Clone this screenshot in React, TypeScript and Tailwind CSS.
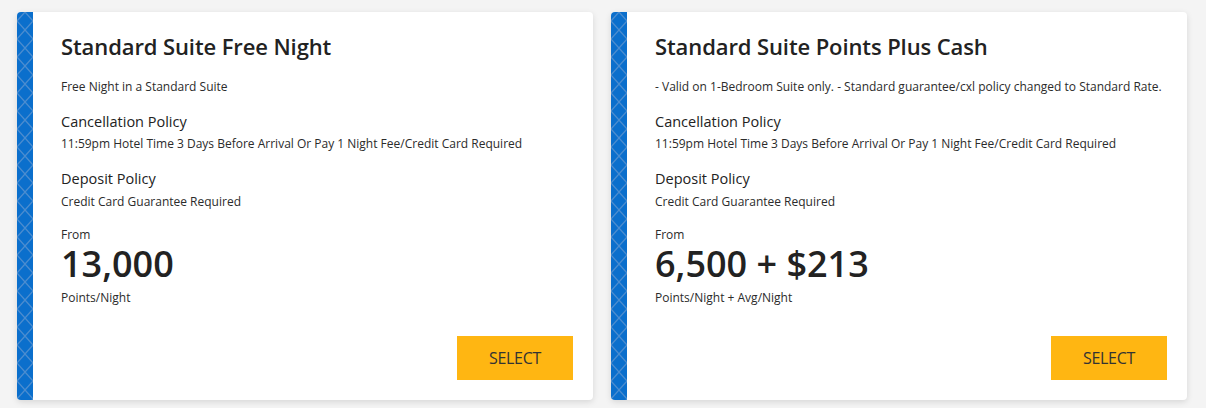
import React from "react";

const Stripe = ({ id }: { id: string }) => (
  <div className="w-4 shrink-0 bg-[#0b6fcc] overflow-hidden rounded-l-[4px]">
    <svg width="16" height="388" className="block">
      <defs>
        <pattern id={id} width="16" height="36" patternUnits="userSpaceOnUse" y="-9">
          <path d="M-2 -2.25 L18 20.25 M-2 33.75 L18 56.25 M18 -2.25 L-2 20.25 M18 33.75 L-2 56.25 M-2 15.75 L18 38.25 M18 15.75 L-2 38.25" stroke="#5b93cf" strokeWidth="1.2" fill="none" opacity="0.8" />
        </pattern>
      </defs>
      <rect width="16" height="388" fill={`url(#${id})`} />
    </svg>
  </div>
);

type CardProps = {
  id: string;
  title: string;
  desc: string;
  price: string;
  unit: string;
};

const Card = ({ id, title, desc, price, unit }: CardProps) => (
  <div className="w-[576px] h-[388px] flex bg-white rounded-[4px] shadow-[0_2px_6px_rgba(0,0,0,0.12)]">
    <Stripe id={id} />
    <div className="flex-1 flex flex-col pl-[28px] pr-5 pt-[19px] pb-5 text-[#2b2b2b]">
      <h2 className="text-[22px] leading-[30px] font-semibold tracking-[-0.1px] text-[#222]">{title}</h2>
      <p className="mt-[17px] text-[12px] leading-[18px]">{desc}</p>
      <h3 className="mt-[15px] text-[14.5px] leading-[22px] font-medium text-[#222]">Cancellation Policy</h3>
      <p className="mt-[2px] text-[12px] leading-[18px]">11:59pm Hotel Time 3 Days Before Arrival Or Pay 1 Night Fee/Credit Card Required</p>
      <h3 className="mt-[15px] text-[14.5px] leading-[22px] font-medium text-[#222]">Deposit Policy</h3>
      <p className="mt-[3px] text-[12px] leading-[18px]">Credit Card Guarantee Required</p>
      <p className="mt-[15px] text-[12px] leading-[18px]">From</p>
      <p className="mt-[2px] text-[36px] leading-[36px] font-semibold text-[#222]">{price}</p>
      <p className="mt-[7px] text-[12px] leading-[18px]">{unit}</p>
      <div className="mt-auto flex justify-end">
        <button className="w-[116px] h-[44px] bg-[#ffb612] text-[#333] text-[16px] tracking-[-0.3px]">SELECT</button>
      </div>
    </div>
  </div>
);

export default function App() {
  return (
    <div className="w-[1206px] h-[408px] bg-[#f4f4f4] flex gap-[18px] pl-[17px] pt-[12px]" style={{ fontFamily: '"Open Sans", sans-serif' }}>
      <Card
        id="p1"
        title="Standard Suite Free Night"
        desc="Free Night in a Standard Suite"
        price="13,000"
        unit="Points/Night"
      />
      <Card
        id="p2"
        title="Standard Suite Points Plus Cash"
        desc="- Valid on 1-Bedroom Suite only. - Standard guarantee/cxl policy changed to Standard Rate."
        price="6,500 + $213"
        unit="Points/Night + Avg/Night"
      />
    </div>
  );
}
